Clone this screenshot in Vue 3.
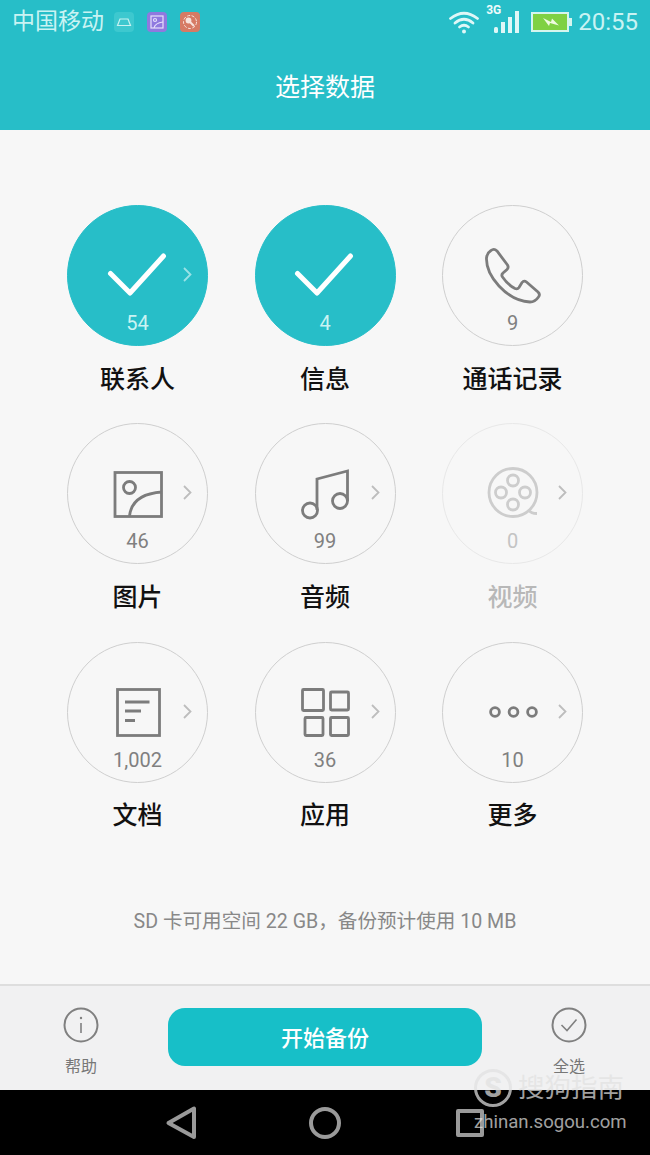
<template>
  <div class="phone">
    <header class="top">
      <div class="status">
        <span class="carrier">中国移动</span>
        <span class="note-icon teal">
          <svg viewBox="0 0 20 20" width="20" height="20" fill="none" stroke="#c8f2f2" stroke-width="1.2">
            <path d="M3.5 13.5 L6 7 H14 L16.5 13.5 Z" />
          </svg>
        </span>
        <span class="note-icon purple">
          <svg viewBox="0 0 20 20" width="20" height="20" fill="none" stroke="#e6e0fb" stroke-width="1.2">
            <rect x="4" y="4" width="12" height="12" />
            <circle cx="8" cy="8" r="1.5" />
            <path d="M7 16 Q8 11 16 10" />
          </svg>
        </span>
        <span class="note-icon orange">
          <svg viewBox="0 0 20 20" width="20" height="20" fill="none" stroke="#f7e3dd" stroke-width="1.4">
            <circle cx="10" cy="10" r="6.5" stroke-dasharray="3 1.5" stroke-width="1" />
            <circle cx="8.5" cy="8.5" r="2.2" fill="#f7e3dd" />
            <path d="M10 10 L14 14" stroke-width="2" />
          </svg>
        </span>
        <span class="status-right">
          <svg class="wifi" viewBox="0 0 30 23" width="30" height="23" fill="none" stroke="#dff7f7" stroke-width="2.8" stroke-linecap="round">
            <path d="M1.5 7.5 Q15 -3 28.5 7.5" />
            <path d="M6 12 Q15 4.5 24 12" />
            <path d="M10.5 16 Q15 12.5 19.5 16" />
            <circle cx="15" cy="20.5" r="2" fill="#dff7f7" stroke="none" />
          </svg>
          <span class="signal">
            <span class="net">3G</span>
            <svg viewBox="0 0 25 22" width="25" height="22" fill="#dff7f7">
              <rect x="0" y="16" width="4" height="6" rx="1.5" />
              <rect x="7" y="11" width="4" height="11" />
              <rect x="14" y="6" width="4" height="16" />
              <rect x="21" y="0" width="4" height="22" />
            </svg>
          </span>
          <svg class="battery" viewBox="0 0 41 20" width="41" height="20">
            <rect x="1" y="1" width="36" height="18" fill="#7fd143" stroke="#d5f5ee" stroke-width="2" />
            <rect x="38" y="6" width="3" height="8" fill="#d5f5ee" />
            <path d="M12 6 L20 10 L21 6.5 L28 13.5 L19 11 L18 14 Z" fill="#eefbe0" />
          </svg>
          <span class="clock">20:55</span>
        </span>
      </div>
      <h1 class="title">选择数据</h1>
    </header>

    <main class="main">
      <div class="grid">
        <div v-for="item in items" :key="item.name" class="cell" :class="{ disabled: item.icon === 'video' }">
          <div class="circle" :class="{ on: item.on }">
            <svg class="icon" viewBox="0 0 60 60" width="60" height="60" fill="none">
              <path v-if="item.on" d="M2.5 28.5 L22 48 L55.5 11" class="check" />
              <path
                v-else-if="item.icon === 'phone'"
                d="M8 5.5 Q11 3 14 6 L24.5 20 Q26 22.5 24 24.5 L20 28 Q18 30 19.5 32 Q25 40 32 43.5 Q34.5 44.5 36 42.5 L39 37.5 Q41 35 43.5 37 L55 47 Q57.5 49.5 55.5 52 Q52 57 47 57 Q30 56 16 41 Q3 27 3.5 13 Q4 8 8 5.5 Z"
              />
              <template v-else-if="item.icon === 'image'">
                <rect x="7" y="9.5" width="46.5" height="44" />
                <circle cx="21.5" cy="24.5" r="6" />
                <path d="M21.5 53 Q24 31 54 29" />
              </template>
              <template v-else-if="item.icon === 'music'">
                <circle cx="15" cy="47.5" r="7.5" />
                <circle cx="45" cy="38" r="7.5" />
                <path d="M22 47 V16 L52.5 8 V38" />
              </template>
              <template v-else-if="item.icon === 'video'">
                <circle cx="30" cy="29.5" r="24" />
                <circle cx="30" cy="17.5" r="5.5" />
                <circle cx="30" cy="41.5" r="5.5" />
                <circle cx="18" cy="29.5" r="5.5" />
                <circle cx="42" cy="29.5" r="5.5" />
                <path d="M46 47.5 Q48 50.5 54 50.5" />
              </template>
              <template v-else-if="item.icon === 'doc'">
                <rect x="9.5" y="7.5" width="42" height="46" />
                <path d="M17 20 H41.5 M17 29 H33 M17 38.5 H27" />
              </template>
              <template v-else-if="item.icon === 'apps'">
                <rect x="7.5" y="7.5" width="21" height="21" rx="1" />
                <rect x="35.5" y="10" width="18" height="18" rx="1" />
                <rect x="10" y="35.5" width="18" height="18" rx="1" />
                <rect x="35.5" y="35.5" width="18" height="18" rx="1" />
              </template>
              <template v-else-if="item.icon === 'more'">
                <circle cx="12" cy="30" r="4.4" />
                <circle cx="30.5" cy="30" r="4.4" />
                <circle cx="49" cy="30" r="4.4" />
              </template>
            </svg>
            <span class="count">{{ item.count }}</span>
            <svg v-if="item.arrow" class="arrow" viewBox="0 0 9 15" width="9" height="15" fill="none">
              <path d="M1 1 L7.5 7.5 L1 14" />
            </svg>
          </div>
          <div class="label">{{ item.name }}</div>
        </div>
      </div>
      <p class="summary">SD 卡可用空间 22 GB，备份预计使用 10 MB</p>
    </main>

    <footer class="footer">
      <div class="side">
        <svg viewBox="0 0 36 36" width="36" height="36" fill="none" stroke="#808080" stroke-width="2">
          <circle cx="18" cy="18" r="16.5" />
          <path d="M18 16 V26" stroke-width="1.6" />
          <circle cx="18" cy="11" r="1.2" fill="#808080" stroke="none" />
        </svg>
        <span>帮助</span>
      </div>
      <button class="start">开始备份</button>
      <div class="side">
        <svg viewBox="0 0 36 36" width="36" height="36" fill="none" stroke="#808080" stroke-width="2">
          <circle cx="18" cy="18" r="16.5" />
          <path d="M10.5 18 L16 23.5 L25.5 12.5" stroke-width="1.6" />
        </svg>
        <span>全选</span>
      </div>
    </footer>

    <nav class="nav">
      <svg viewBox="0 0 40 40" width="40" height="40">
        <path d="M7.5 20 L33 5.5 V34 Z" />
      </svg>
      <svg viewBox="0 0 40 40" width="40" height="40">
        <circle cx="20" cy="20" r="14" />
      </svg>
      <svg viewBox="0 0 40 40" width="40" height="40">
        <rect x="8" y="8" width="24" height="24" />
      </svg>
    </nav>

    <div class="watermark">
      <div class="wm-top">
        <span class="wm-logo">S</span>
        <span class="wm-name">搜狗指南</span>
      </div>
      <div class="wm-url">zhinan.sogou.com</div>
    </div>
  </div>
</template>

<script setup>
const items = [
  { name: "联系人", count: "54", on: true, arrow: true },
  { name: "信息", count: "4", on: true },
  { name: "通话记录", count: "9", icon: "phone" },
  { name: "图片", count: "46", icon: "image", arrow: true },
  { name: "音频", count: "99", icon: "music", arrow: true },
  { name: "视频", count: "0", icon: "video", arrow: true },
  { name: "文档", count: "1,002", icon: "doc", arrow: true },
  { name: "应用", count: "36", icon: "apps", arrow: true },
  { name: "更多", count: "10", icon: "more", arrow: true },
];
</script>

<style>
html,
body {
  margin: 0;
  background: #000;
}
</style>

<style scoped>
.phone {
  position: relative;
  display: flex;
  flex-direction: column;
  width: 650px;
  height: 1155px;
  overflow: hidden;
  background: #f7f7f7;
  font-family: Roboto, "Noto Sans CJK SC", sans-serif;
}
.top {
  height: 130px;
  flex-shrink: 0;
  background: #27bec8;
}
.status {
  display: flex;
  align-items: center;
  height: 44px;
  padding: 0 12px;
  color: #c9f3f3;
}
.carrier {
  width: 102px;
  font-size: 23px;
  line-height: 44px;
}
.note-icon {
  display: flex;
  width: 20px;
  height: 20px;
  margin-right: 13px;
  border-radius: 4px;
}
.teal {
  background: #3dc8cf;
}
.purple {
  background: #8f79df;
}
.orange {
  background: #d67a64;
}
.status-right {
  display: flex;
  align-items: center;
  margin-left: auto;
}
.wifi {
  margin-right: 15px;
}
.signal {
  position: relative;
  display: flex;
  width: 25px;
  height: 22px;
  margin-right: 12px;
}
.net {
  position: absolute;
  top: -7px;
  left: -8px;
  color: #eefbfb;
  font-size: 12px;
  font-weight: 700;
  line-height: 12px;
}
.battery {
  margin-right: 6px;
}
.clock {
  font-size: 24px;
  line-height: 44px;
}
.title {
  margin: 0;
  padding-top: 22px;
  color: #fff;
  font-size: 25px;
  font-weight: 400;
  line-height: 44px;
  text-align: center;
}
.main {
  flex: 1;
  padding-top: 75px;
}
.grid {
  display: grid;
  grid-template-columns: repeat(3, 187.5px);
  row-gap: 27.9px;
  padding-left: 43.75px;
}
.cell {
  display: flex;
  flex-direction: column;
  align-items: center;
}
.circle {
  position: relative;
  display: flex;
  flex-direction: column;
  align-items: center;
  box-sizing: border-box;
  width: 141px;
  height: 141px;
  padding-top: 40px;
  border: 1px solid #cfcfcf;
  border-radius: 50%;
}
.circle.on {
  border-color: #27bec8;
  background: #27bec8;
}
.icon {
  overflow: visible;
  margin-top: -1px;
  stroke: #7c7c7c;
  stroke-width: 2.8;
}
.check {
  stroke: #fff;
  stroke-width: 5;
  stroke-linecap: round;
  stroke-linejoin: round;
}
.count {
  margin-top: 8px;
  color: #808080;
  font-size: 20px;
  line-height: 20px;
}
.on .count {
  color: #c9f3f3;
}
.arrow {
  position: absolute;
  top: 61px;
  left: 115px;
  stroke: #bdbdbd;
  stroke-width: 1.8;
}
.on .arrow {
  stroke: #9ae2e6;
}
.label {
  margin-top: 17.5px;
  color: #111;
  font-size: 25px;
  font-weight: 500;
  line-height: 32px;
}
.disabled .circle {
  border-color: #e8e8e8;
}
.disabled .icon {
  stroke: #cdcdcd;
}
.disabled .count {
  color: #c4c4c4;
}
.disabled .label {
  color: #b8b8b8;
}
.summary {
  margin: 78px 0 0;
  color: #888;
  font-size: 19.6px;
  line-height: 24px;
  text-align: center;
}
.footer {
  display: grid;
  grid-template-columns: 162px 1fr 162px;
  align-items: start;
  box-sizing: border-box;
  height: 106px;
  flex-shrink: 0;
  border-top: 2px solid #dedede;
  background: #f1f1f2;
}
.side {
  display: flex;
  flex-direction: column;
  align-items: center;
  padding-top: 21px;
  color: #777;
  font-size: 16px;
  line-height: 22px;
}
.side span {
  margin-top: 13px;
}
.start {
  justify-self: center;
  width: 314px;
  height: 58px;
  margin-top: 22px;
  padding: 0 0 2px;
  border: none;
  border-radius: 17px;
  background: #17bfc8;
  color: #fff;
  font-family: inherit;
  font-size: 22px;
  font-weight: 500;
}
.nav {
  display: flex;
  justify-content: center;
  align-items: center;
  gap: 104.5px;
  height: 65px;
  flex-shrink: 0;
  background: #000;
}
.nav svg {
  fill: none;
  stroke: #9a9a9a;
  stroke-width: 4;
  stroke-linejoin: round;
}
.watermark {
  position: absolute;
  top: 1067px;
  left: 474px;
  color: rgba(225, 225, 225, 0.72);
}
.wm-top {
  display: flex;
  align-items: center;
  gap: 6px;
}
.wm-logo {
  box-sizing: border-box;
  width: 38px;
  height: 38px;
  border: 3px solid currentColor;
  border-radius: 50%;
  font-size: 28px;
  font-weight: 900;
  line-height: 31px;
  text-align: center;
}
.wm-name {
  font-size: 26.5px;
  line-height: 42px;
}
.wm-url {
  margin-top: 2px;
  font-size: 18.6px;
  line-height: 22px;
}
</style>
